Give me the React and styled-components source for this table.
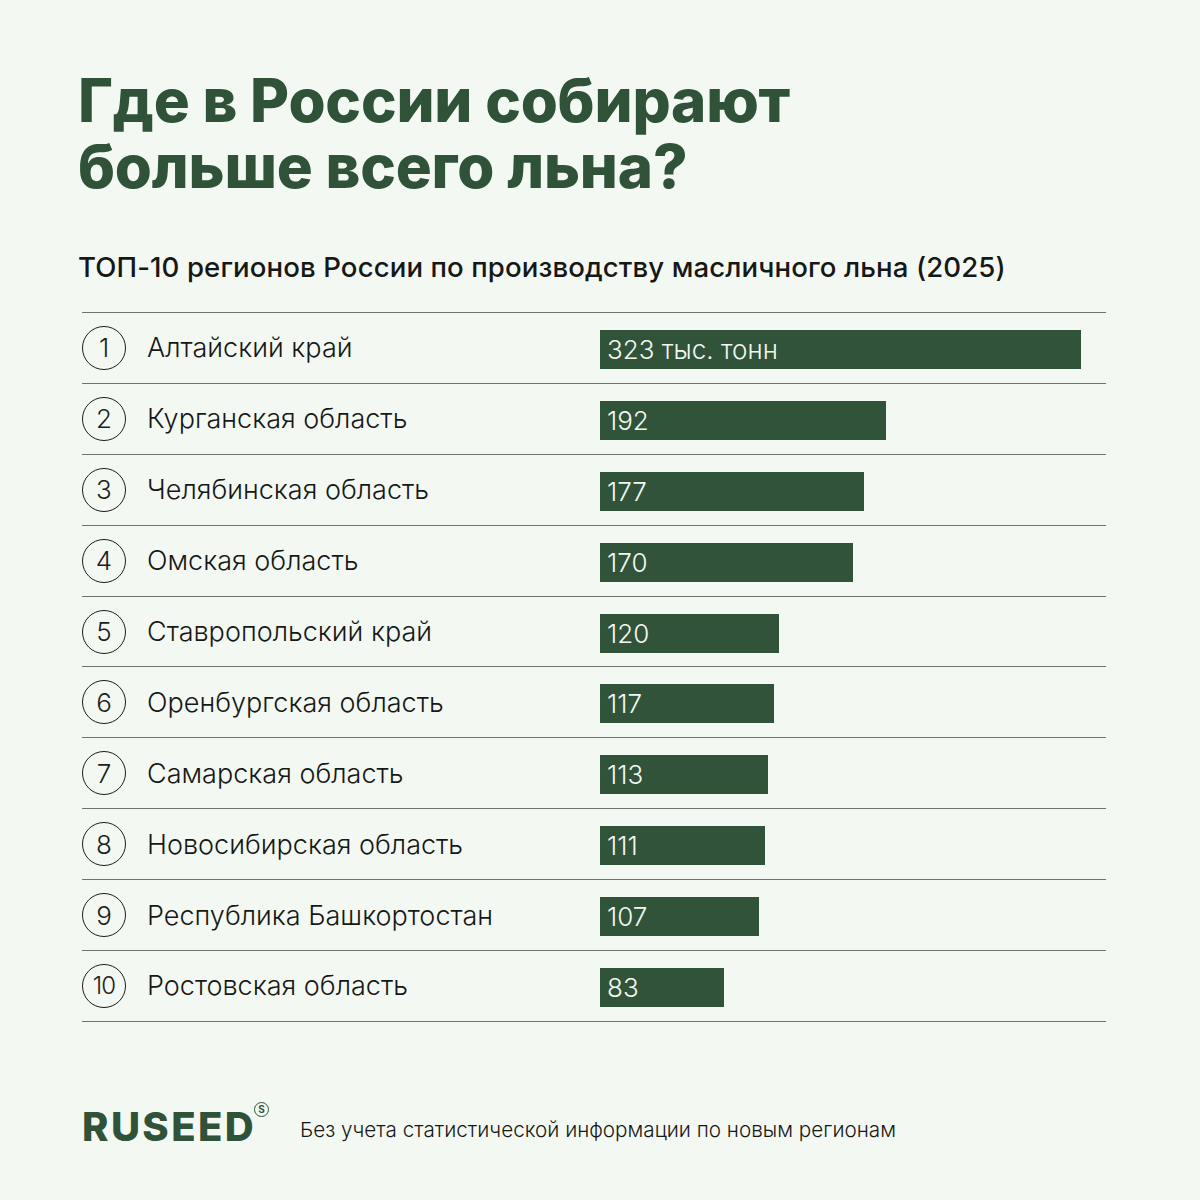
import React from "react";
import styled, { createGlobalStyle } from "styled-components";

const regions = [
  { name: "Алтайский край", value: 323, label: "323 тыс. тонн" },
  { name: "Курганская область", value: 192 },
  { name: "Челябинская область", value: 177 },
  { name: "Омская область", value: 170 },
  { name: "Ставропольский край", value: 120 },
  { name: "Оренбургская область", value: 117 },
  { name: "Самарская область", value: 113 },
  { name: "Новосибирская область", value: 111 },
  { name: "Республика Башкортостан", value: 107 },
  { name: "Ростовская область", value: 83 }
];

const PX_PER_UNIT = 481 / 323;

const GlobalStyle = createGlobalStyle`
  body {
    margin: 0;
    background: #f4f8f3;
    font-family: Inter, "Noto Sans", sans-serif;
  }
`;

const Page = styled.main`
  width: 1200px;
  height: 1200px;
  box-sizing: border-box;
  padding: 67px 94px 0 78px;
  background: #f4f8f3;
  display: flex;
  flex-direction: column;
`;

const Title = styled.h1`
  margin: 0;
  font-size: 60px;
  line-height: 66px;
  font-weight: 800;
  letter-spacing: -0.2px;
  color: #2f5239;
`;

const Subtitle = styled.h2`
  margin: 52px 0 0;
  font-size: 27.6px;
  line-height: 32px;
  font-weight: 500;
  letter-spacing: 0.1px;
  color: #161816;
`;

const Table = styled.div`
  margin: 29px 0 0 4px;
  border-top: 1.5px solid #707370;
`;

const Row = styled.div`
  height: 69.9px;
  border-bottom: 1.5px solid #707370;
  display: grid;
  grid-template-columns: 65px 453px 1fr;
  align-items: center;
`;

const Rank = styled.span`
  width: 42px;
  height: 42px;
  border: 1.2px solid #1c1e1c;
  border-radius: 50%;
  display: flex;
  align-items: center;
  justify-content: center;
  font-size: ${p => (p.$wide ? "24px" : "26px")};
  font-weight: 300;
  letter-spacing: ${p => (p.$wide ? "-1px" : "0")};
  color: #1c1e1c;
`;

const Name = styled.span`
  font-size: 27px;
  font-weight: 300;
  color: #161816;
`;

const Bar = styled.div`
  height: 39px;
  margin-top: 3px;
  background: #30533a;
  color: #f4f8f3;
  font-size: 26px;
  font-weight: 300;
  line-height: 39px;
  padding-left: 7px;
  box-sizing: border-box;
  white-space: nowrap;
`;

const Footer = styled.footer`
  margin: 80px 0 0 4px;
  display: flex;
  align-items: center;
  gap: 31px;
`;

const Logo = styled.div`
  position: relative;
  font-size: 40px;
  font-weight: 800;
  letter-spacing: 2.4px;
  color: #2f5239;
  padding-right: 13px;
`;

const Mark = styled.span`
  position: absolute;
  right: 0;
  top: 0;
  width: 13px;
  height: 13px;
  border: 1.5px solid #2f5239;
  border-radius: 50%;
  font-size: 10px;
  font-weight: 700;
  line-height: 13px;
  text-align: center;
  letter-spacing: 0;
`;

const Note = styled.p`
  margin: 6px 0 0;
  font-size: 20.7px;
  font-weight: 300;
  color: #161816;
`;

export default function App() {
  return (
    <>
      <GlobalStyle />
      <Page>
        <Title>
          Где в России собирают
          <br />
          больше всего льна?
        </Title>
        <Subtitle>ТОП-10 регионов России по производству масличного льна (2025)</Subtitle>
        <Table>
          {regions.map((r, i) => (
            <Row key={r.name}>
              <Rank $wide={i === 9}>{i + 1}</Rank>
              <Name>{r.name}</Name>
              <Bar style={{ width: Math.round(r.value * PX_PER_UNIT) }}>{r.label || r.value}</Bar>
            </Row>
          ))}
        </Table>
        <Footer>
          <Logo>
            RUSEED
            <Mark>S</Mark>
          </Logo>
          <Note>Без учета статистической информации по новым регионам</Note>
        </Footer>
      </Page>
    </>
  );
}
